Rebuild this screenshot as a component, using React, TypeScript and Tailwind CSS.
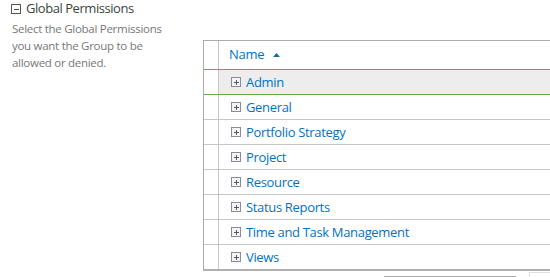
import React from "react";

const rows = [
  "Admin",
  "General",
  "Portfolio Strategy",
  "Project",
  "Resource",
  "Status Reports",
  "Time and Task Management",
  "Views",
];

function PlusBox() {
  return (
    <svg width="10" height="10" viewBox="0 0 10 10" className="shrink-0">
      <rect x="0.5" y="0.5" width="9" height="9" fill="#f4f4f4" stroke="#8a8a9a" />
      <path d="M2.5 5h5M5 2.5v5" stroke="#555566" strokeWidth="1" shapeRendering="crispEdges" />
    </svg>
  );
}

function MinusBox() {
  return (
    <svg width="10" height="10" viewBox="0 0 10 10" className="shrink-0">
      <rect x="0.5" y="0.5" width="9" height="9" fill="#ffffff" stroke="#4d5a4d" />
      <path d="M2.5 5h5" stroke="#3f4a3f" strokeWidth="1" shapeRendering="crispEdges" />
    </svg>
  );
}

export default function App() {
  return (
    <div
      className="w-[550px] h-[277px] overflow-hidden bg-white flex"
      style={{ fontFamily: '"Open Sans", "Noto Sans", sans-serif' }}
    >
      <div className="w-[203px] shrink-0">
        <div className="flex items-center h-[17px] pl-[11px] gap-[5px]">
          <MinusBox />
          <span className="text-[13px] tracking-[-0.45px] text-[#3b443b] leading-[17px]">Global Permissions</span>
        </div>
        <div className="pl-[12px] pt-[3px] w-[180px] text-[11.5px] tracking-[-0.28px] leading-[17px] text-[#777777]">
          Select the Global Permissions you want the Group to be allowed or denied.
        </div>
      </div>
      <div className="flex flex-col w-[400px] shrink-0 pt-[40px]">
        <div className="border-t border-l border-[#ababab] border-b-2 border-b-[#b0b0b0]">
          <div className="flex h-[28px]">
            <div className="w-[15px] border-r border-[#c6c6c6]" />
            <div className="flex items-center pl-[10px] gap-[9px]">
              <span className="text-[13px] tracking-[-0.3px] text-[#0072c6]">Name</span>
              <svg width="7" height="4" viewBox="0 0 7 4">
                <path d="M0 4L3.5 0L7 4Z" fill="#1a6aa0" />
              </svg>
            </div>
          </div>
          {rows.map((r, i) => (
            <div
              key={r}
              className={
                i === 0
                  ? "flex h-[26px] bg-[#ededed] border-y border-[#6aa84f]"
                  : i === rows.length - 1
                  ? "flex h-[24px]"
                  : "flex h-[25px] border-b border-[#c6c6c6]"
              }
            >
              <div className="w-[15px] border-r border-[#c6c6c6] bg-white" />
              <div className="flex items-center pl-[12px] gap-[5px]">
                <PlusBox />
                <span className="text-[13px] tracking-[-0.33px] text-[#0072c6] leading-[17px]">{r}</span>
              </div>
            </div>
          ))}
        </div>
        <div className="flex items-start h-[8px]">
          <div className="w-[181px] shrink-0" />
          <div className="w-[132px] mt-[5px] border-t border-[#ababab]" />
          <div className="w-[13px] shrink-0" />
          <div className="w-[30px] h-[8px] mt-[1px] border-l border-t border-[#e0e0e0]" />
        </div>
      </div>
    </div>
  );
}
